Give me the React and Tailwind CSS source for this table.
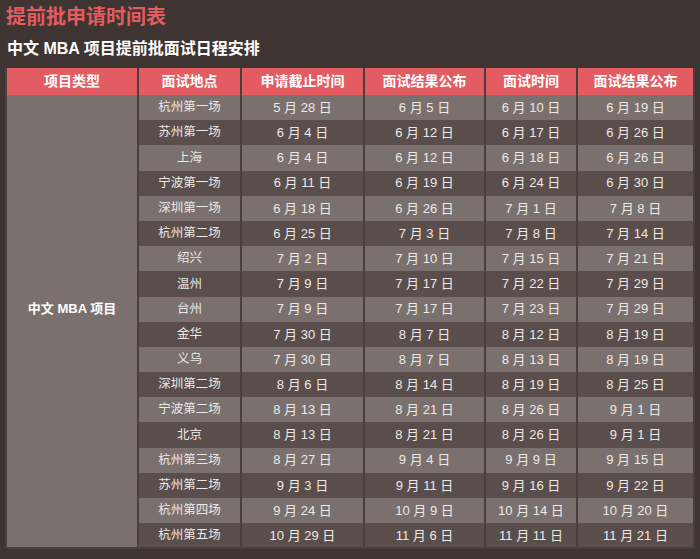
const rows = [
    ["杭州第一场", "5 月 28 日", "6 月 5 日", "6 月 10 日", "6 月 19 日"],
    ["苏州第一场", "6 月 4 日", "6 月 12 日", "6 月 17 日", "6 月 26 日"],
    ["上海", "6 月 4 日", "6 月 12 日", "6 月 18 日", "6 月 26 日"],
    ["宁波第一场", "6 月 11 日", "6 月 19 日", "6 月 24 日", "6 月 30 日"],
    ["深圳第一场", "6 月 18 日", "6 月 26 日", "7 月 1 日", "7 月 8 日"],
    ["杭州第二场", "6 月 25 日", "7 月 3 日", "7 月 8 日", "7 月 14 日"],
    ["绍兴", "7 月 2 日", "7 月 10 日", "7 月 15 日", "7 月 21 日"],
    ["温州", "7 月 9 日", "7 月 17 日", "7 月 22 日", "7 月 29 日"],
    ["台州", "7 月 9 日", "7 月 17 日", "7 月 23 日", "7 月 29 日"],
    ["金华", "7 月 30 日", "8 月 7 日", "8 月 12 日", "8 月 19 日"],
    ["义乌", "7 月 30 日", "8 月 7 日", "8 月 13 日", "8 月 19 日"],
    ["深圳第二场", "8 月 6 日", "8 月 14 日", "8 月 19 日", "8 月 25 日"],
    ["宁波第二场", "8 月 13 日", "8 月 21 日", "8 月 26 日", "9 月 1 日"],
    ["北京", "8 月 13 日", "8 月 21 日", "8 月 26 日", "9 月 1 日"],
    ["杭州第三场", "8 月 27 日", "9 月 4 日", "9 月 9 日", "9 月 15 日"],
    ["苏州第二场", "9 月 3 日", "9 月 11 日", "9 月 16 日", "9 月 22 日"],
    ["杭州第四场", "9 月 24 日", "10 月 9 日", "10 月 14 日", "10 月 20 日"],
    ["杭州第五场", "10 月 29 日", "11 月 6 日", "11 月 11 日", "11 月 21 日"],
];

const headers = ["项目类型", "面试地点", "申请截止时间", "面试结果公布", "面试时间", "面试结果公布"];

export default function App() {
    return (
        <div
            className="w-[700px] h-[559px] bg-[#3e3431] overflow-hidden"
            style={{ fontFamily: '"Liberation Sans", "Noto Sans CJK SC", sans-serif' }}
        >
            <div className="pl-[6px] pt-[4px] text-[20px] leading-[26px] font-bold text-[#e35c60]">
                提前批申请时间表
            </div>
            <div className="pl-[7px] pt-[8px] text-[16px] leading-[21px] font-bold text-white">
                中文 MBA 项目提前批面试日程安排
            </div>
            <table className="ml-[5px] mt-[9px] w-[688px] border-collapse table-fixed text-[13px]">
                <colgroup>
                    <col className="w-[132px]" />
                    <col className="w-[103px]" />
                    <col className="w-[123px]" />
                    <col className="w-[121px]" />
                    <col className="w-[92px]" />
                    <col className="w-[117px]" />
                </colgroup>
                <thead>
                    <tr className="h-[27px] bg-[#e35c62]">
                        {headers.map((h, i) => (
                            <th
                                key={i}
                                className="border-x-2 border-[#4a3f3c] font-bold text-[14px] text-white p-0"
                            >
                                {h}
                            </th>
                        ))}
                    </tr>
                </thead>
                <tbody>
                    {rows.map((r, i) => (
                        <tr
                            key={i}
                            className={
                                i % 2 === 0
                                    ? "h-[25.2px] bg-[#7a716e]"
                                    : "h-[25.2px] bg-[#594e4b]"
                            }
                        >
                            {i === 0 && (
                                <td
                                    rowSpan={rows.length}
                                    className="bg-[#7a716e] border-x-2 border-b-2 border-[#4a3f3c] text-center font-bold text-white p-0 pb-[24px]"
                                >
                                    中文 MBA 项目
                                </td>
                            )}
                            {r.map((c, j) => (
                                <td
                                    key={j}
                                    className={
                                        (j === 0 ? "text-[12.5px] " : "") +
                                        "border-x-2 border-[#4a3f3c] text-center text-[#ece8e6] p-0 " +
                                        (i === rows.length - 1 ? "border-b-2" : "")
                                    }
                                >
                                    {c}
                                </td>
                            ))}
                        </tr>
                    ))}
                </tbody>
            </table>
        </div>
    );
}
